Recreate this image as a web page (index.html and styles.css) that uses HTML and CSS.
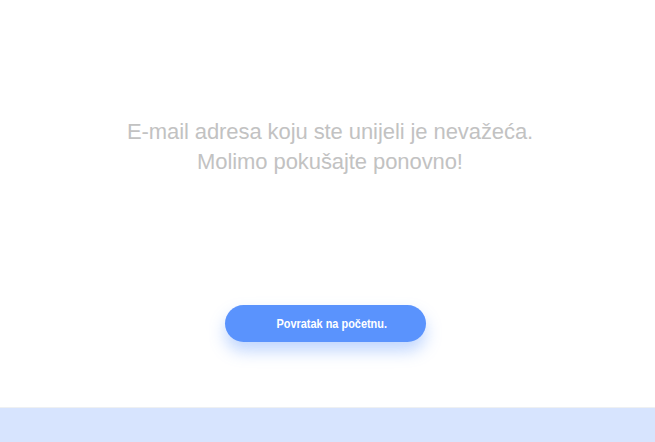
FILE: index.html
```html
<!DOCTYPE html>
<html lang="hr">
<head>
<meta charset="utf-8">
<title>Nevažeća e-mail adresa</title>
<link rel="stylesheet" href="styles.css">
</head>
<body>
<div class="page">
  <main class="content">
    <p class="message">E-mail adresa koju ste unijeli je nevažeća.<br>Molimo pokušajte ponovno!</p>
    <a class="back-btn" href="#"><span class="back-label">Povratak na početnu.</span></a>
  </main>
  <footer class="band"></footer>
</div>
</body>
</html>
```
FILE: styles.css
```css
html, body {
  margin: 0;
  padding: 0;
  background: #ffffff;
}
.page {
  min-height: 100vh;
  display: flex;
  flex-direction: column;
  font-family: "Liberation Sans", Arial, sans-serif;
}
.content {
  flex: 1;
  display: flex;
  flex-direction: column;
  align-items: center;
  padding-top: 117px;
}
.message {
  margin: 0 0 0 5px;
  text-align: center;
  font-size: 22px;
  line-height: 30px;
  color: #c2c2c2;
  letter-spacing: -0.08px;
}
.back-btn {
  margin-top: 128px;
  margin-right: 4px;
  width: 201px;
  height: 37px;
  box-sizing: border-box;
  padding-left: 13px;
  border-radius: 19px;
  background: #5a93fd;
  color: #ffffff;
  text-decoration: none;
  display: flex;
  align-items: center;
  justify-content: center;
  box-shadow: 0 9px 16px rgba(90, 147, 253, 0.38);
}
.back-label {
  display: inline-block;
  font-family: "Liberation Sans Narrow", "Liberation Sans", Arial, sans-serif;
  font-weight: bold;
  font-size: 13px;
  transform: scaleX(0.84);
  white-space: nowrap;
}
.band {
  height: 34px;
  background: #d7e4fe;
  border-top: 1px solid #eef0f2;
}
```
